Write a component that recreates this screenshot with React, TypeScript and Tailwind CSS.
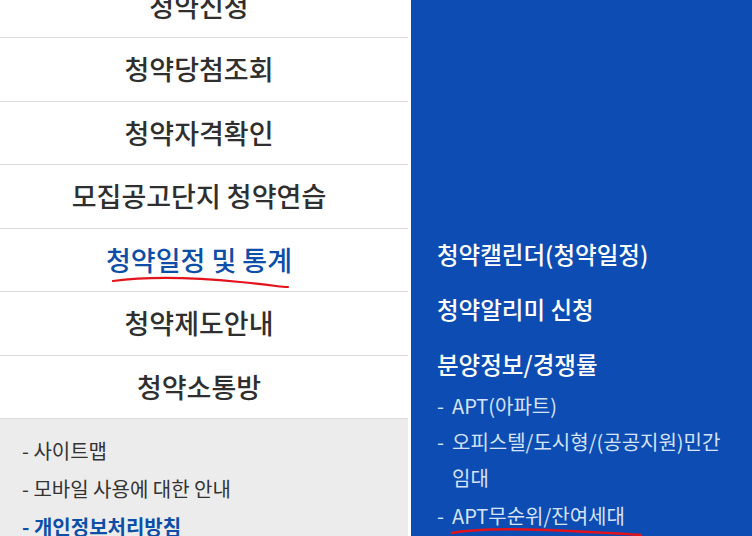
import React from "react";

const font = { fontFamily: '"Noto Sans CJK KR", "Noto Sans", sans-serif' };

const rows = [
  "청약신청",
  "청약당첨조회",
  "청약자격확인",
  "모집공고단지 청약연습",
  "청약일정 및 통계",
  "청약제도안내",
  "청약소통방",
];

export default function App() {
  return (
    <div
      className="relative flex w-[752px] h-[536px] overflow-hidden bg-white"
      style={font}
    >
      <div className="flex flex-col w-[408px] shrink-0 mt-[-25.5px]">
        {rows.map((r, i) => (
          <div
            key={r}
            className={
              i === 4
                ? "h-[63.5px] shrink-0 border-b border-[#dcdcdc] flex items-center justify-center pr-[10px] text-[27px] font-medium text-[#0d4ea8]"
                : "h-[63.5px] shrink-0 border-b border-[#dcdcdc] flex items-center justify-center pr-[10px] text-[27px] font-medium text-[#2f2f2f]"
            }
          >
            {r}
          </div>
        ))}
        <div className="flex-1 bg-[#ececec] pt-[13px] pl-[22px] text-[20px] leading-[38px] text-[#333333]">
          <div>- 사이트맵</div>
          <div>- 모바일 사용에 대한 안내</div>
          <div className="font-bold text-[#0d4ea8]">- 개인정보처리방침</div>
        </div>
      </div>
      <div className="w-[3px] shrink-0 bg-white" />
      <div className="flex-1 bg-[#0d4db3] pl-[26px] pt-[227px] text-white">
        <div className="text-[23.5px] font-medium leading-[55px]">청약캘린더(청약일정)</div>
        <div className="text-[23.5px] font-medium leading-[55px]">청약알리미 신청</div>
        <div className="text-[23.5px] font-medium leading-[55px]">분양정보/경쟁률</div>
        <div className="mt-[-4px] text-[20px] leading-[36px] text-[#d6e2f5]">
          <div className="flex">
            <span className="w-[15px] shrink-0">-</span>
            <span>APT(아파트)</span>
          </div>
          <div className="flex">
            <span className="w-[15px] shrink-0">-</span>
            <span className="w-[285px]">오피스텔/도시형/(공공지원)민간 임대</span>
          </div>
          <div className="flex mt-[2px]">
            <span className="w-[15px] shrink-0">-</span>
            <span>APT무순위/잔여세대</span>
          </div>
        </div>
      </div>
      <svg
        className="absolute left-0 top-0 pointer-events-none"
        width="752"
        height="536"
        viewBox="0 0 752 536"
      >
        <path
          d="M113 281 C 150 276, 200 278, 240 282 S 280 287, 288 287"
          fill="none"
          stroke="#e3121b"
          strokeWidth="2.2"
          strokeLinecap="round"
        />
        <path
          d="M452 533 C 480 528, 530 529, 570 531 S 630 534, 641 535"
          fill="none"
          stroke="#e3121b"
          strokeWidth="2.6"
          strokeLinecap="round"
        />
      </svg>
    </div>
  );
}
